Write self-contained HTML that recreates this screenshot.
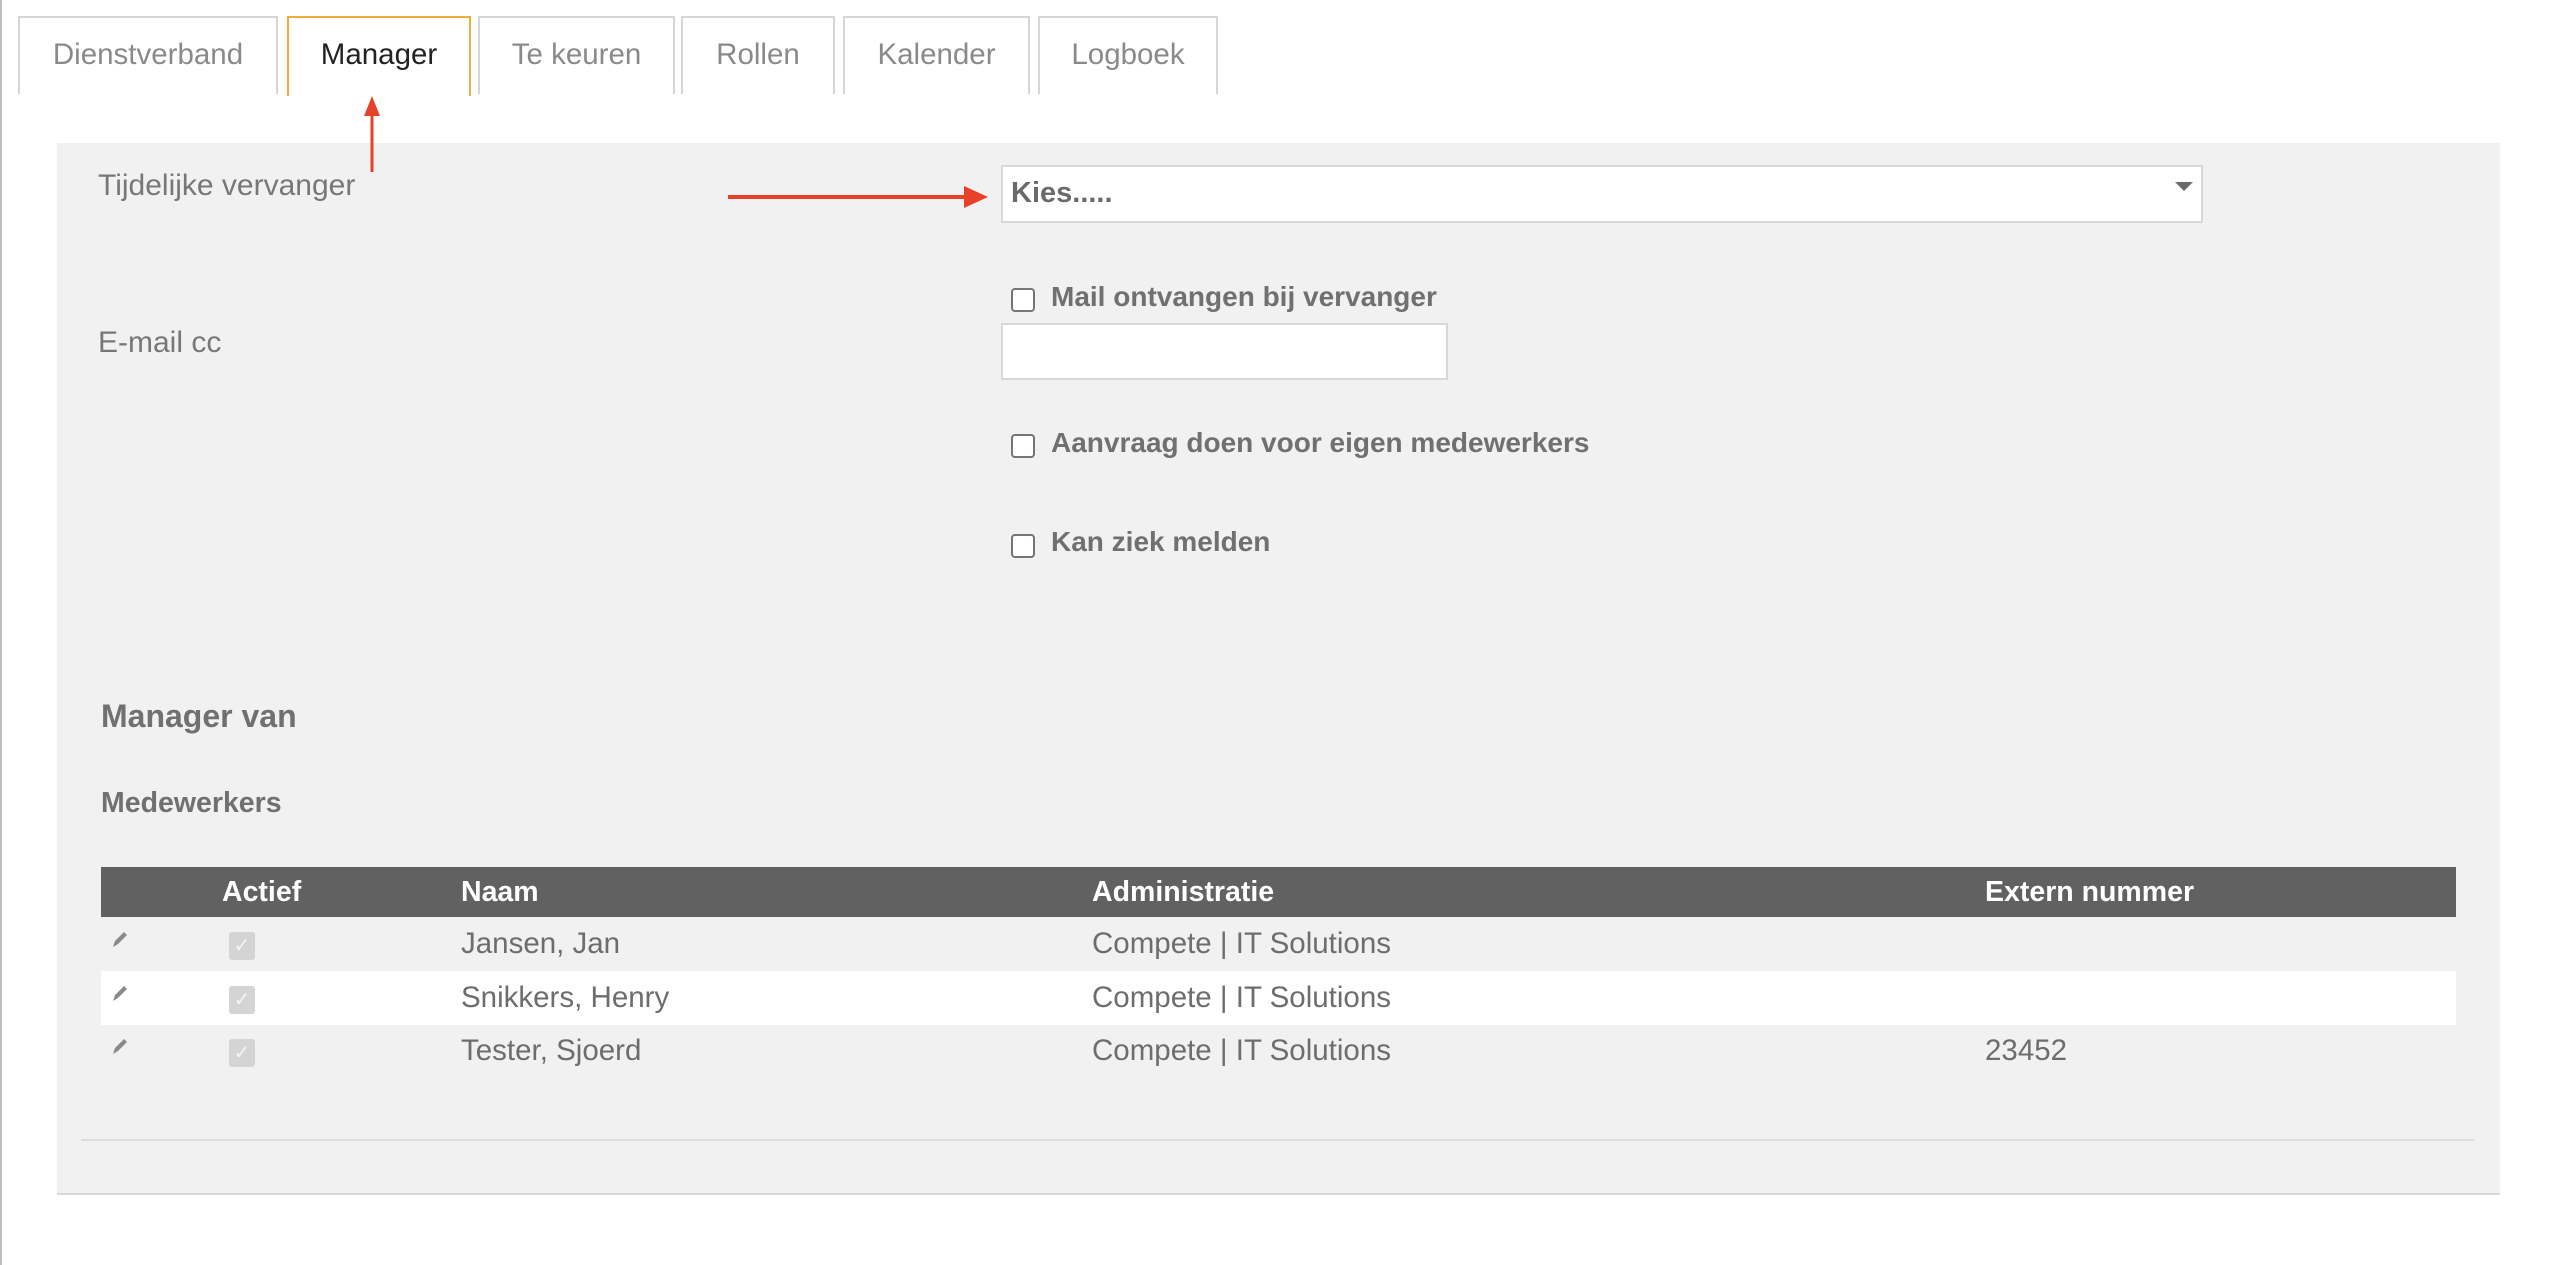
<!DOCTYPE html>
<html><head><meta charset="utf-8"><style>
*{margin:0;padding:0;box-sizing:border-box}
body{width:2556px;height:1265px;background:#fff;font-family:"Liberation Sans",sans-serif;color:#6b6b6b;position:relative;overflow:hidden}
.a{position:absolute;white-space:nowrap}
.tab{position:absolute;top:16px;height:78px;border:2px solid #d6d6d6;border-bottom:none;background:#fff;font-size:29.5px;color:#8a8a8a;text-align:center;line-height:74px}
.lbl{font-size:30px;color:#777}
.cb{position:absolute;width:24px;height:24px;border:2px solid #757575;border-radius:4px;background:#fff}
.bl{font-size:28px;font-weight:bold;color:#707070}
.td{font-size:29.5px;color:#6d6d6d}
.th{font-size:28.5px;font-weight:bold;color:#fff}
.ck{position:absolute;width:26px;height:28px;background:#d4d4d4;border-radius:3px;color:#f4f4f4;font-size:20px;text-align:center;line-height:28px}
</style></head><body>
<div class="a" style="left:0;top:0;width:2px;height:1265px;background:#bdbdbd"></div>
<div class="tab" style="left:18px;width:260px">Dienstverband</div>
<div class="tab" style="left:287px;width:184px;border-color:#f0ad3c;border-width:2px;color:#222;height:80px">Manager</div>
<div class="tab" style="left:478px;width:197px">Te keuren</div>
<div class="tab" style="left:681px;width:154px">Rollen</div>
<div class="tab" style="left:843px;width:187px">Kalender</div>
<div class="tab" style="left:1038px;width:180px">Logboek</div>

<div class="a" style="left:57px;top:143px;width:2443px;height:1052px;background:#f1f1f1;border-bottom:2px solid #d8d8d8"></div>
<div class="a" style="left:81px;top:1139px;width:2393px;height:2px;background:#dcdcdc"></div>

<div class="a lbl" style="left:98px;top:169px">Tijdelijke vervanger</div>
<div class="a lbl" style="left:98px;top:326px">E-mail cc</div>

<svg class="a" style="left:360px;top:94px" width="24" height="80"><line x1="12" y1="20" x2="12" y2="78" stroke="#e8412a" stroke-width="3"/><polygon points="12,2 4,22 20,22" fill="#e8412a"/></svg>
<svg class="a" style="left:728px;top:184px" width="262" height="26"><line x1="0" y1="13" x2="240" y2="13" stroke="#e8412a" stroke-width="4"/><polygon points="260,13 236,2 236,24" fill="#e8412a"/></svg>

<div class="a" style="left:1001px;top:165px;width:1202px;height:58px;background:#fff;border:2px solid #d8d8d8"></div>
<div class="a bl" style="left:1011px;top:177px;font-size:29px;color:#6a6a6a">Kies.....</div>
<svg class="a" style="left:2175px;top:182px" width="20" height="12"><polygon points="0,0 18,0 9,9" fill="#6a6a6a"/></svg>

<div class="cb" style="left:1011px;top:288px"></div>
<div class="a bl" style="left:1051px;top:281px">Mail ontvangen bij vervanger</div>
<div class="a" style="left:1001px;top:323px;width:447px;height:57px;background:#fff;border:2px solid #d8d8d8"></div>
<div class="cb" style="left:1011px;top:434px"></div>
<div class="a bl" style="left:1051px;top:427px">Aanvraag doen voor eigen medewerkers</div>
<div class="cb" style="left:1011px;top:534px"></div>
<div class="a bl" style="left:1051px;top:526px">Kan ziek melden</div>

<div class="a bl" style="left:101px;top:698px;font-size:32px">Manager van</div>
<div class="a bl" style="left:101px;top:787px;font-size:28.5px">Medewerkers</div>

<div class="a" style="left:101px;top:867px;width:2355px;height:50px;background:#616161"></div>
<div class="a th" style="left:222px;top:876px">Actief</div>
<div class="a th" style="left:461px;top:876px">Naam</div>
<div class="a th" style="left:1092px;top:876px">Administratie</div>
<div class="a th" style="left:1985px;top:876px">Extern nummer</div>
<div class="a" style="left:101px;top:971px;width:2355px;height:54px;background:#fff"></div>

<svg class="a" style="left:110px;top:930px" width="20" height="20"><path d="M3 17 L5 11 L14 2 L17 5 L8 14 Z" fill="#8a8a8a"/></svg>
<svg class="a" style="left:110px;top:984px" width="20" height="20"><path d="M3 17 L5 11 L14 2 L17 5 L8 14 Z" fill="#8a8a8a"/></svg>
<svg class="a" style="left:110px;top:1037px" width="20" height="20"><path d="M3 17 L5 11 L14 2 L17 5 L8 14 Z" fill="#8a8a8a"/></svg>
<div class="ck" style="left:229px;top:932px">✓</div>
<div class="ck" style="left:229px;top:986px">✓</div>
<div class="ck" style="left:229px;top:1039px">✓</div>

<div class="a td" style="left:461px;top:927px">Jansen, Jan</div>
<div class="a td" style="left:1092px;top:927px">Compete | IT Solutions</div>
<div class="a td" style="left:461px;top:981px">Snikkers, Henry</div>
<div class="a td" style="left:1092px;top:981px">Compete | IT Solutions</div>
<div class="a td" style="left:461px;top:1034px">Tester, Sjoerd</div>
<div class="a td" style="left:1092px;top:1034px">Compete | IT Solutions</div>
<div class="a td" style="left:1985px;top:1034px">23452</div>
</body></html>
